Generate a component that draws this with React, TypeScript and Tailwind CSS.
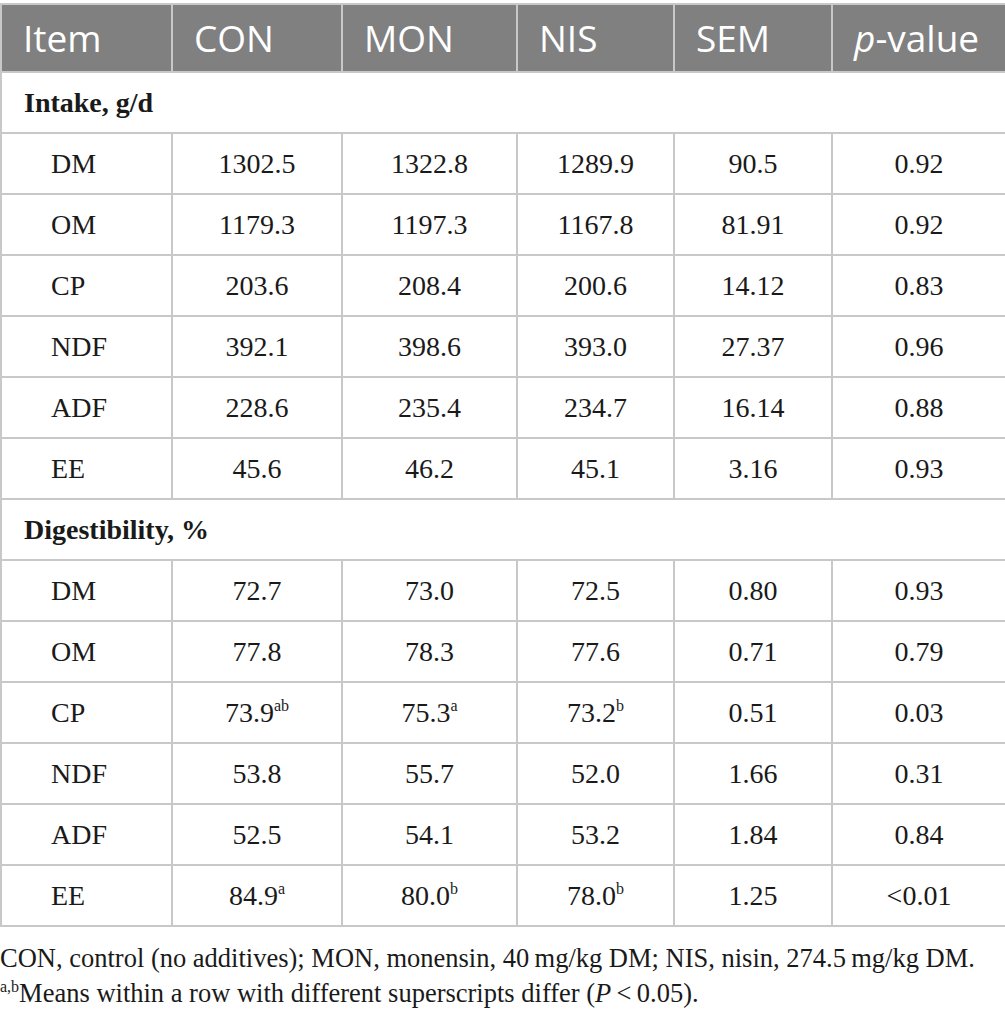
import React from "react";

type Cell = { v: string; sup?: string };

const intake: [string, Cell[]][] = [
  ["DM", [{ v: "1302.5" }, { v: "1322.8" }, { v: "1289.9" }, { v: "90.5" }, { v: "0.92" }]],
  ["OM", [{ v: "1179.3" }, { v: "1197.3" }, { v: "1167.8" }, { v: "81.91" }, { v: "0.92" }]],
  ["CP", [{ v: "203.6" }, { v: "208.4" }, { v: "200.6" }, { v: "14.12" }, { v: "0.83" }]],
  ["NDF", [{ v: "392.1" }, { v: "398.6" }, { v: "393.0" }, { v: "27.37" }, { v: "0.96" }]],
  ["ADF", [{ v: "228.6" }, { v: "235.4" }, { v: "234.7" }, { v: "16.14" }, { v: "0.88" }]],
  ["EE", [{ v: "45.6" }, { v: "46.2" }, { v: "45.1" }, { v: "3.16" }, { v: "0.93" }]],
];

const digest: [string, Cell[]][] = [
  ["DM", [{ v: "72.7" }, { v: "73.0" }, { v: "72.5" }, { v: "0.80" }, { v: "0.93" }]],
  ["OM", [{ v: "77.8" }, { v: "78.3" }, { v: "77.6" }, { v: "0.71" }, { v: "0.79" }]],
  ["CP", [{ v: "73.9", sup: "ab" }, { v: "75.3", sup: "a" }, { v: "73.2", sup: "b" }, { v: "0.51" }, { v: "0.03" }]],
  ["NDF", [{ v: "53.8" }, { v: "55.7" }, { v: "52.0" }, { v: "1.66" }, { v: "0.31" }]],
  ["ADF", [{ v: "52.5" }, { v: "54.1" }, { v: "53.2" }, { v: "1.84" }, { v: "0.84" }]],
  ["EE", [{ v: "84.9", sup: "a" }, { v: "80.0", sup: "b" }, { v: "78.0", sup: "b" }, { v: "1.25" }, { v: "<0.01" }]],
];

const serif = "font-['Liberation_Serif',serif]";
const sans = "font-['Open_Sans',sans-serif]";
const td = "border-2 border-[#c8c8c8] h-[61px] p-0";
const th = "border-2 border-[#c8c8c8] h-[68px] pl-[21px] text-left font-normal";

function Rows({ rows }: { rows: [string, Cell[]][] }) {
  return (
    <>
      {rows.map(([name, cells]) => (
        <tr key={name}>
          <td className={`${td} pl-[49px] text-left`}>{name}</td>
          {cells.map((c, i) => (
            <td key={i} className={`${td} text-center`}>
              {c.v}
              {c.sup && <sup className="text-[16px] top-[-11px]">{c.sup}</sup>}
            </td>
          ))}
        </tr>
      ))}
    </>
  );
}

function Section({ label }: { label: string }) {
  return (
    <tr>
      <td colSpan={6} className={`${td} pl-[22px] font-bold text-left`}>
        {label}
      </td>
    </tr>
  );
}

export default function App() {
  return (
    <div className={`w-[1005px] bg-white pt-[3px] text-[#1a1a1a] ${serif}`}>
      <table className="w-[1005px] table-fixed border-collapse text-[28px]">
        <colgroup>
          <col className="w-[171px]" />
          <col className="w-[170px]" />
          <col className="w-[175px]" />
          <col className="w-[157px]" />
          <col className="w-[158px]" />
          <col className="w-[174px]" />
        </colgroup>
        <thead>
          <tr className={`bg-[#808080] text-white ${sans} text-[37px]`}>
            {["Item", "CON", "MON", "NIS", "SEM"].map((h) => (
              <th key={h} className={th}>
                {h}
              </th>
            ))}
            <th className={th}>
              <span className="italic">p</span>-value
            </th>
          </tr>
        </thead>
        <tbody>
          <Section label="Intake, g/d" />
          <Rows rows={intake} />
          <Section label="Digestibility, %" />
          <Rows rows={digest} />
        </tbody>
      </table>
      <div className="pt-[14px] text-[26.5px] leading-[35px]">
        <p>CON, control (no additives); MON, monensin, 40&thinsp;mg/kg DM; NIS, nisin, 274.5&thinsp;mg/kg DM.</p>
        <p>
          <sup className="text-[16px] top-[-10px]">a,b</sup>Means within a row with different superscripts differ (
          <span className="italic">P</span>&thinsp;&lt;&thinsp;0.05).
        </p>
      </div>
    </div>
  );
}
